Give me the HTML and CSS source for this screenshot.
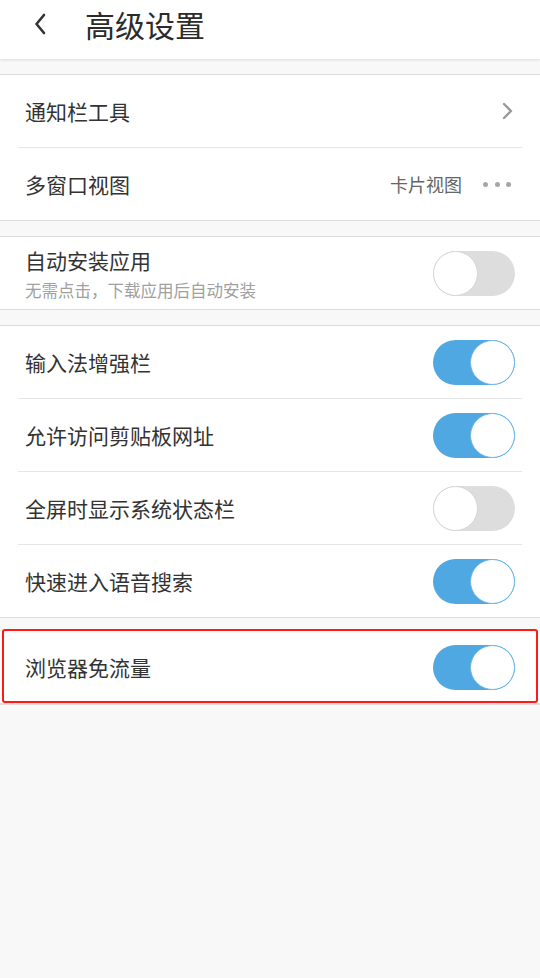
FILE: index.html
```html
<!DOCTYPE html>
<html lang="zh-CN">
<head>
  <meta charset="UTF-8">
  <meta name="viewport" content="width=device-width, initial-scale=1.0">
  <title>高级设置</title>
  <link rel="stylesheet" href="styles.css">
</head>
<body>

  <div class="header">
    <svg class="back" width="12" height="22" viewBox="0 0 12 22">
      <path d="M10 2 L2.5 11 L10 20" fill="none" stroke="#333" stroke-width="2.6" stroke-linecap="round" stroke-linejoin="round"/>
    </svg>
    <span class="title">高级设置</span>
  </div>

  <!-- entries -->
  <div class="section">
    <div class="row">
      <span class="label">通知栏工具</span>
      <svg class="arrow" width="11" height="18" viewBox="0 0 11 18">
        <path d="M2 2 L9 9 L2 16" fill="none" stroke="#999" stroke-width="2.4" stroke-linecap="round" stroke-linejoin="round"/>
      </svg>
    </div>
    <div class="row">
      <span class="label">多窗口视图</span>
      <div class="value">
        卡片视图
        <span class="dots"><i></i><i></i><i></i></span>
      </div>
    </div>
  </div>

  <div class="section">
    <div class="row">
      <div class="text">
        <span class="label">自动安装应用</span>
        <span class="sub">无需点击，下载应用后自动安装</span>
      </div>
      <span class="switch"></span>
    </div>
  </div>

  <div class="section">
    <div class="row">
      <span class="label">输入法增强栏</span>
      <span class="switch on"></span>
    </div>
    <div class="row">
      <span class="label">允许访问剪贴板网址</span>
      <span class="switch on"></span>
    </div>
    <div class="row">
      <span class="label">全屏时显示系统状态栏</span>
      <span class="switch"></span>
    </div>
    <div class="row">
      <span class="label">快速进入语音搜索</span>
      <span class="switch on"></span>
    </div>
  </div>

  <div class="section last">
    <div class="row marked">
      <span class="label">浏览器免流量</span>
      <span class="switch on"></span>
    </div>
  </div>

</body>
</html>
```

FILE: styles.css
```css
body {
  font-family: "Noto Sans CJK SC", "Noto Sans", sans-serif;
  background: #f8f8f8;
  color: #333;
  margin: 0;
  padding: 0;
  height: 978px;
  overflow: hidden;
}

.header {
  height: 59px;
  background: #fff;
  display: flex;
  align-items: center;
  padding-left: 34px;
  padding-bottom: 12px;
  box-sizing: border-box;
  box-shadow: 0 1px 3px rgba(0,0,0,0.12);
  position: relative;
  z-index: 1;
}

.back {
  margin-right: 39px;
}

.title {
  font-size: 30px;
  line-height: 1;
  color: #2b2b2b;
}

.section {
  background: #fff;
  border-top: 1px solid #dcdcdc;
  border-bottom: 1px solid #dcdcdc;
  margin-top: 15px;
}

.section:first-of-type {
  margin-top: 17px;
}

.section.last {
  margin-top: 12px;
  border-top-color: #eee;
  border-bottom: 2px solid #dedede;
}

.row {
  height: 72px;
  display: flex;
  align-items: center;
  justify-content: space-between;
  padding: 0 25px;
  position: relative;
}

.row + .row::before {
  content: "";
  position: absolute;
  top: -1px;
  left: 18px;
  right: 18px;
  height: 1px;
  background: #e6e6e6;
}

.row + .row {
  margin-top: 1px;
}

.label {
  font-size: 21px;
  line-height: 26px;
}

.text {
  display: flex;
  flex-direction: column;
  padding-top: 2px;
}

.sub {
  font-size: 16.5px;
  line-height: 24px;
  color: #a0a0a0;
  margin-top: 5px;
}

.arrow {
  margin-right: 2px;
}

.value {
  display: flex;
  align-items: center;
  font-size: 18px;
  color: #666;
  margin-right: 4px;
}

.dots {
  display: flex;
  gap: 6.5px;
  margin-left: 21px;
}

.dots i {
  width: 5px;
  height: 5px;
  border-radius: 50%;
  background: #a6a6a6;
}

.switch {
  width: 82px;
  height: 45px;
  border-radius: 23px;
  background: #dddddd;
  position: relative;
  flex-shrink: 0;
}

.switch::after {
  content: "";
  position: absolute;
  top: 0;
  left: 0;
  width: 43px;
  height: 43px;
  border-radius: 50%;
  background: #fff;
  border: 1px solid #d6d6d6;
}

.switch.on {
  background: #4fa8e1;
}

.switch.on::after {
  left: auto;
  right: 0;
  border-color: #6db7e6;
}

.marked::after {
  content: "";
  position: absolute;
  top: -2px;
  bottom: 0;
  left: 2px;
  right: 2px;
  border: 2px solid #ff1a1a;
  border-radius: 3px;
}
```
